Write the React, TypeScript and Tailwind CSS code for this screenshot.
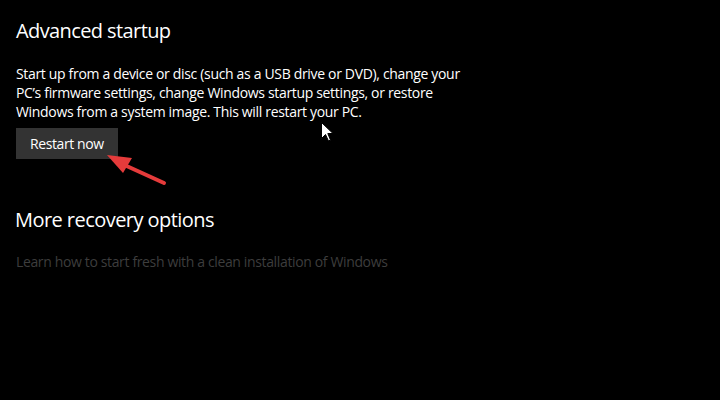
import React from "react";

export default function App() {
  return (
    <div
      className="relative w-[720px] h-[400px] bg-black text-white overflow-hidden"
      style={{ fontFamily: '"Open Sans", "Noto Sans", sans-serif' }}
    >
      <div className="flex flex-col items-start pl-4 pt-[17px]">
        <h1 className="text-[20px] leading-[28px] font-normal tracking-[-0.6px] text-white">Advanced startup</h1>
        <p className="mt-[19px] w-[460px] text-[14px] leading-[19px] tracking-[-0.33px] text-white">
          Start up from a device or disc (such as a USB drive or DVD), change your PC’s firmware settings, change Windows startup settings, or restore Windows from a system image. This will restart your PC.
        </p>
        <button className="mt-[7px] bg-[#333333] px-[14px] py-[6px] text-[14px] leading-[19px] tracking-[-0.4px] text-white">
          Restart now
        </button>
        <h2 className="mt-[47px] -ml-px text-[20px] leading-[28px] font-normal tracking-[-0.55px] text-white">More recovery options</h2>
        <a className="mt-[18px] text-[14px] leading-[19px] tracking-[-0.36px] text-[#3d3d3d]">
          Learn how to start fresh with a clean installation of Windows
        </a>
      </div>

      <svg className="absolute left-0 top-0" width="720" height="400" viewBox="0 0 720 400">
        <line x1="164" y1="183" x2="120" y2="163" stroke="#e53b3b" strokeWidth="4" strokeLinecap="round" />
        <polygon points="107,155 132,158 123,173" fill="#e53b3b" />
        <path
          d="M321.5 122.5 L321.5 138.5 L325.5 134.5 L328.5 141 L330.5 140 L327.8 133.5 L333 133.5 Z"
          fill="#ffffff"
          stroke="#000000"
          strokeWidth="1"
          strokeLinejoin="miter"
        />
      </svg>
    </div>
  );
}
